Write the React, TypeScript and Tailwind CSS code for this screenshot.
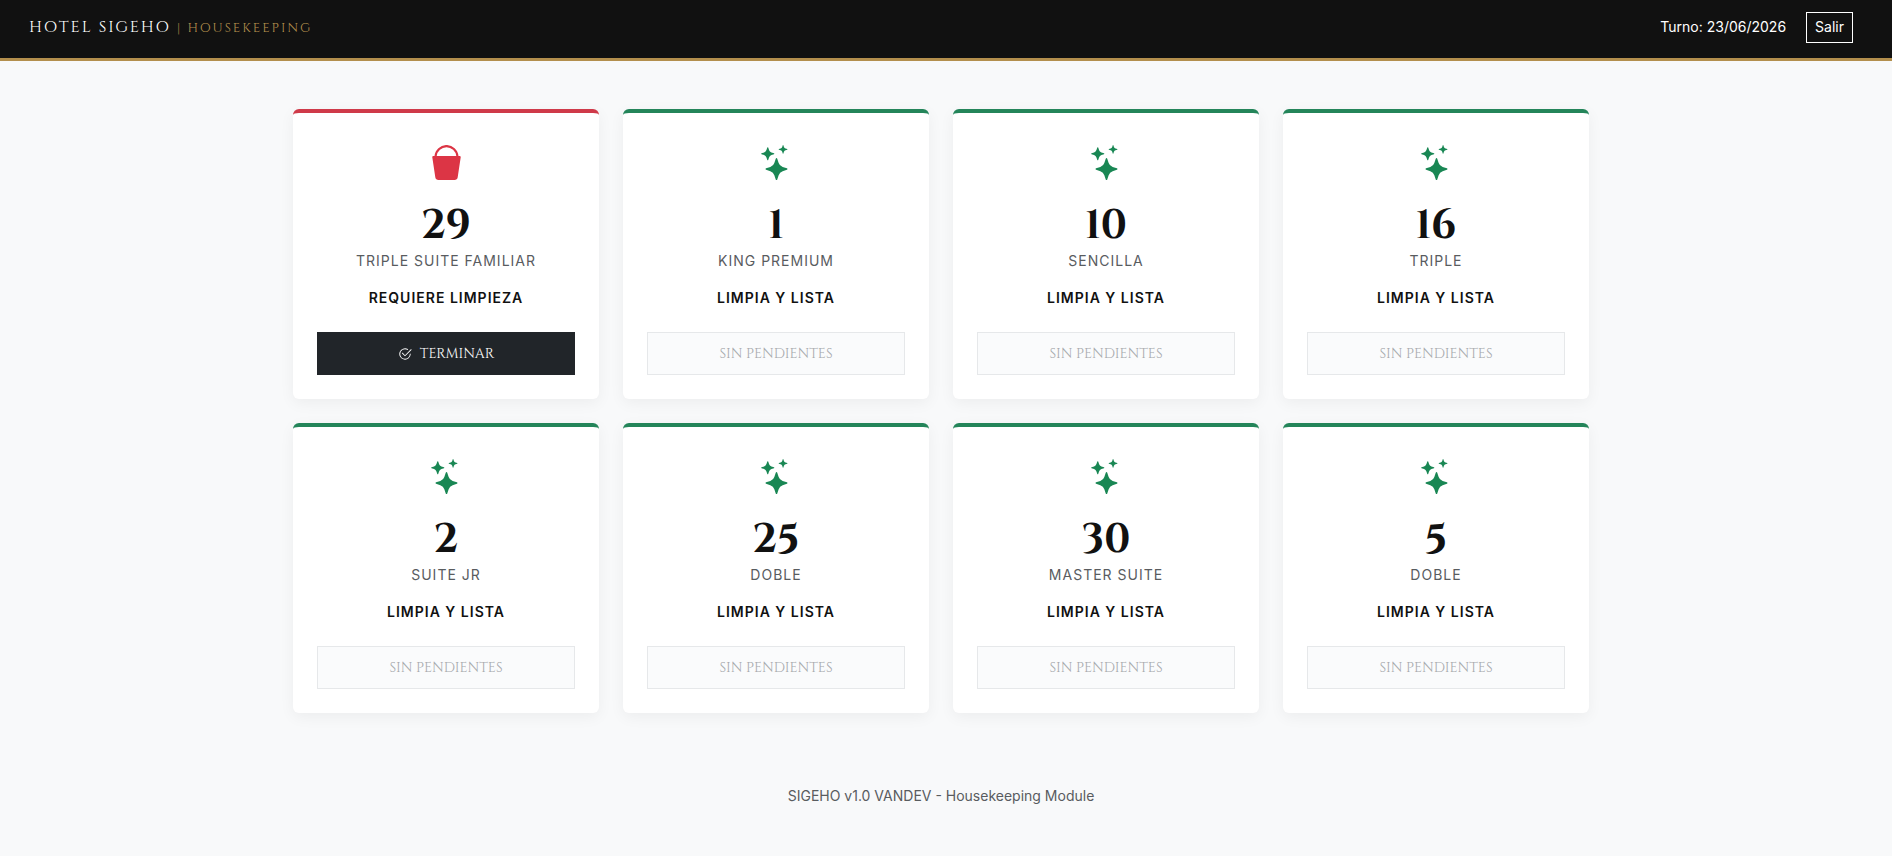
import { BsBucketFill, BsCheck2Circle, BsStars } from 'react-icons/bs';

type Room = { number: number; type: string; dirty?: boolean };

const rooms: Room[] = [
  { number: 29, type: 'Triple Suite Familiar', dirty: true },
  { number: 1, type: 'King Premium' },
  { number: 10, type: 'Sencilla' },
  { number: 16, type: 'Triple' },
  { number: 2, type: 'Suite Jr' },
  { number: 25, type: 'Doble' },
  { number: 30, type: 'Master Suite' },
  { number: 5, type: 'Doble' },
];

function RoomCard({ room }: { room: Room }) {
  return (
    <article
      className={`flex flex-col items-center rounded-md border-t-4 bg-white p-6 text-center shadow-[0_4px_15px_rgba(0,0,0,0.05)] ${
        room.dirty ? 'border-[#cf3a49]' : 'border-[#24855a]'
      }`}
    >
      {room.dirty ? (
        <BsBucketFill className="mt-2 size-[35px] text-[#dc3545]" />
      ) : (
        <BsStars className="mt-2 size-[35px] text-[#198754]" />
      )}
      <h2 className="mt-6 font-['Cinzel','Liberation_Serif',serif] text-[40px] leading-[44px] font-bold text-[#111111]">
        {room.number}
      </h2>
      <p className="mt-[3px] text-sm leading-5 tracking-[1px] text-[#595c5f] uppercase">{room.type}</p>
      <p className="mt-[17px] text-sm leading-5 font-semibold tracking-[1px] uppercase">
        {room.dirty ? 'Requiere limpieza' : 'Limpia y lista'}
      </p>
      {room.dirty ? (
        <button className="mt-6 flex h-[43px] w-full items-center justify-center gap-2 bg-[#212529] font-['Cinzel','Liberation_Serif',serif] text-sm font-medium text-white uppercase">
          <BsCheck2Circle />
          Terminar
        </button>
      ) : (
        <button
          disabled
          className="mt-6 h-[43px] w-full border border-[#e6e8ea] bg-[#fafbfc] font-['Cinzel','Liberation_Serif',serif] text-sm font-medium text-[#a6a9ac] uppercase"
        >
          Sin pendientes
        </button>
      )}
    </article>
  );
}

function App() {
  return (
    <div className="min-h-screen bg-[#f8f9fa] font-['Inter',sans-serif] text-[#111111]">
      <header className="flex h-[61px] items-center justify-between border-b-[3px] border-[#b38f4d] bg-[#111111] pr-[39px] pb-1 pl-[29px] text-white">
        <h1 className="font-['Cinzel','Liberation_Serif',serif] text-base tracking-[2px]">
          HOTEL SIGEHO <span className="text-[13px] text-[#b38f4d]">| HOUSEKEEPING</span>
        </h1>
        <div className="flex items-center gap-5 text-sm">
          <span>Turno: 23/06/2026</span>
          <button className="h-[31px] border border-white px-2">Salir</button>
        </div>
      </header>

      <div className="pr-[10px]">
        <main className="mx-auto grid max-w-[1320px] grid-cols-1 gap-6 px-3 pt-12 sm:grid-cols-2 lg:grid-cols-4">
          {rooms.map((room) => (
            <RoomCard key={room.number} room={room} />
          ))}
        </main>
        <footer className="pt-[73px] pb-12 text-center text-sm text-[#595c5f]">
          SIGEHO v1.0 VANDEV - Housekeeping Module
        </footer>
      </div>
    </div>
  );
}

export default App;
